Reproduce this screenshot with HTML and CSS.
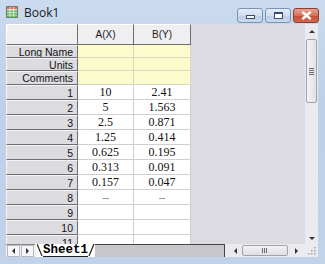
FILE: index.html
```html
<!DOCTYPE html>
<html>
<head>
<meta charset="utf-8">
<link rel="stylesheet" href="styles.css">
</head>
<body>
<div class="window">
  <div class="titlebar">
    <svg class="appicon" width="12" height="12" viewBox="0 0 12 12">
      <rect x="0.5" y="0.5" width="11" height="11" fill="#fff" stroke="#6d7d6a"/>
      <rect x="1" y="1" width="10" height="2.5" fill="#d96b6b"/>
      <rect x="1" y="4" width="10" height="7" fill="#5cb85c"/>
      <path d="M4 1v10M7.5 1v10M1 4h10M1 6.5h10M1 9h10" stroke="#e8f5e0" stroke-width="0.8"/>
    </svg>
    <span class="title">Book1</span>
    <div class="ctrls">
      <div class="btn"><span class="g-min"></span></div>
      <div class="btn"><span class="g-max"></span></div>
      <div class="btn close">
        <svg width="11" height="9" viewBox="0 0 11 9"><path d="M2 1.5l7 6M9 1.5l-7 6" stroke="#fff" stroke-width="2.4" stroke-linecap="round"/></svg>
      </div>
    </div>
  </div>
  <div class="client">
    <div class="main">
      <div class="sheet">
        <div class="grid">
          <div class="corner"></div>
          <div class="colhdr">A(X)</div>
          <div class="colhdr">B(Y)</div>

          <div class="rowhdr">Long Name</div><div class="lbl"></div><div class="lbl"></div>
          <div class="rowhdr">Units</div><div class="lbl"></div><div class="lbl"></div>
          <div class="rowhdr">Comments</div><div class="lbl"></div><div class="lbl"></div>

          <div class="rowhdr">1</div><div class="cell">10</div><div class="cell">2.41</div>
          <div class="rowhdr">2</div><div class="cell">5</div><div class="cell">1.563</div>
          <div class="rowhdr">3</div><div class="cell">2.5</div><div class="cell">0.871</div>
          <div class="rowhdr">4</div><div class="cell">1.25</div><div class="cell">0.414</div>
          <div class="rowhdr">5</div><div class="cell">0.625</div><div class="cell">0.195</div>
          <div class="rowhdr">6</div><div class="cell">0.313</div><div class="cell">0.091</div>
          <div class="rowhdr">7</div><div class="cell">0.157</div><div class="cell">0.047</div>
          <div class="rowhdr">8</div><div class="cell dash">--</div><div class="cell dash">--</div>
          <div class="rowhdr">9</div><div class="cell"></div><div class="cell"></div>
          <div class="rowhdr">10</div><div class="cell"></div><div class="cell"></div>
          <div class="rowhdr">11</div><div class="cell"></div><div class="cell"></div>
        </div>
      </div>
      <div class="vscroll">
        <div class="arrow up"></div>
        <div class="vthumb"><span class="grip"></span></div>
        <div class="vspace"></div>
        <div class="arrow down"></div>
      </div>
    </div>
    <div class="tabbar">
      <div class="tabnav">
        <div class="navbtn"><span class="tri-l"></span></div>
        <div class="navbtn"><span class="tri-r"></span></div>
      </div>
      <div class="tab">
        <svg class="edge" width="6" height="13" viewBox="0 0 6 13"><path d="M0 0L5 12" stroke="#222" stroke-width="1.2" fill="none"/></svg>
        <span class="tabtext">Sheet1</span>
        <svg class="edge" width="7" height="13" viewBox="0 0 7 13"><path d="M1 12L6 0" stroke="#222" stroke-width="1.2" fill="none"/></svg>
      </div>
      <div class="tabfill"></div>
      <div class="hscroll">
        <div class="harrow"><span class="tri-l"></span></div>
        <div class="hthumb"><span class="hgrip"></span></div>
        <div class="harrow"><span class="tri-r"></span></div>
      </div>
      <div class="sizegrip">
        <svg width="8" height="8" viewBox="0 0 8 8"><g fill="#a0a0a8"><rect x="6" y="0" width="1.5" height="1.5"/><rect x="3" y="3" width="1.5" height="1.5"/><rect x="6" y="3" width="1.5" height="1.5"/><rect x="0" y="6" width="1.5" height="1.5"/><rect x="3" y="6" width="1.5" height="1.5"/><rect x="6" y="6" width="1.5" height="1.5"/></g></svg>
      </div>
    </div>
  </div>
</div>
</body>
</html>
```

FILE: styles.css
```css
* { box-sizing: border-box; }
html, body { margin: 0; padding: 0; }
body {
  width: 325px;
  height: 264px;
  overflow: hidden;
  background: #c3d5ea;
}
.window {
  width: 325px;
  height: 264px;
  display: flex;
  flex-direction: column;
  background: linear-gradient(#cadbef, #bdd0e7 40%, #c0d3e9);
}
.titlebar {
  height: 24px;
  display: flex;
  align-items: center;
  padding-left: 6px;
}
.appicon { display: block; }
.title {
  font-family: "Open Sans", "Noto Sans", sans-serif;
  font-size: 12px;
  color: #1a1a1a;
  margin-left: 6px;
  margin-top: 1px;
}
.ctrls {
  margin-left: auto;
  display: flex;
  gap: 2px;
  margin-right: 6px;
  margin-top: 6px;
}
.btn {
  width: 26px;
  height: 15px;
  border: 1px solid #7b92b3;
  border-radius: 3px;
  background: linear-gradient(#e4edf8, #cfdcee 50%, #bccde6 51%, #c9d8ec);
  display: flex;
  align-items: center;
  justify-content: center;
}
.btn.close {
  width: 26px;
  border-color: #8f3b2f;
  background: linear-gradient(#e8a493, #d5705c 50%, #c44a33 51%, #cf6a50);
}
.g-min {
  width: 9px;
  height: 4px;
  background: #fff;
  border: 1px solid #3b4d66;
  margin-top: 4px;
}
.g-max {
  width: 9px;
  height: 7px;
  border: 1px solid #3b4d66;
  border-top-width: 2px;
  background: #fff;
}
.client {
  margin: 0 7px 7px 6px;
  flex: 1;
  display: flex;
  flex-direction: column;
  background: #dddce3;
  min-height: 0;
}
.main {
  flex: 1;
  display: flex;
  min-height: 0;
}
.sheet {
  flex: 1;
  background: #dcdbe2;
  overflow: hidden;
}
.grid {
  display: grid;
  grid-template-columns: 72px 56px 57px;
  grid-template-rows: 21px 13px 13px 14px repeat(11, 15px);
}
.grid > div {
  display: flex;
  align-items: center;
  overflow: hidden;
  white-space: nowrap;
}
.corner {
  background: #efeff1;
  border-top: 1px solid #fff;
  border-left: 1px solid #fff;
  border-right: 1px solid #6e6e6e;
  border-bottom: 1px solid #6e6e6e;
}
.colhdr {
  background: #efeff1;
  border-right: 1px solid #6e6e6e;
  border-bottom: 1px solid #6e6e6e;
  border-top: 1px solid #fff;
  justify-content: center;
  font-family: "Liberation Sans", Arial, sans-serif;
  font-size: 10px;
  color: #222;
}
.rowhdr {
  background: #dcdce0;
  border-top: 1px solid #f4f4f6;
  border-left: 1px solid #f4f4f6;
  border-right: 1px solid #6e6e6e;
  border-bottom: 1px solid #6e6e6e;
  justify-content: flex-end;
  padding-right: 4px;
  font-family: "Liberation Sans", Arial, sans-serif;
  font-size: 10.5px;
  color: #111;
}
.lbl {
  background: #fbfbcb;
  border-right: 1px solid #d8d8c0;
  border-bottom: 1px solid #d8d8c0;
}
.cell {
  background: #fff;
  border-right: 1px solid #cfcfd4;
  border-bottom: 1px solid #cfcfd4;
  justify-content: center;
  font-family: "Liberation Serif", "Times New Roman", serif;
  font-size: 12px;
  color: #111;
}
.cell.dash { color: #777; font-family: "Liberation Sans", Arial, sans-serif; font-size: 10px; }
.vscroll {
  width: 13px;
  background: #ebeaef;
  display: flex;
  flex-direction: column;
  align-items: center;
}
.arrow {
  width: 0; height: 0;
  border-left: 3px solid transparent;
  border-right: 3px solid transparent;
}
.arrow.up { border-bottom: 3px solid #333; margin-top: 6px; }
.arrow.down { border-top: 3px solid #333; margin-bottom: 4px; }
.vthumb {
  margin-top: 6px;
  width: 11px;
  height: 64px;
  border: 1px solid #a2a2aa;
  border-radius: 2px;
  background: linear-gradient(90deg, #f2f2f4, #e2e2e6);
  display: flex;
  align-items: center;
  justify-content: center;
}
.grip {
  width: 5px;
  height: 7px;
  background: repeating-linear-gradient(#6a6a70 0 1px, transparent 1px 2px);
}
.vspace { flex: 1; }
.tabbar {
  height: 13px;
  display: flex;
  background: #f2f2f4;
  overflow: hidden;
}
.tabnav {
  display: flex;
  width: 29px;
  border-top: 1px solid #888;
}
.navbtn {
  width: 13px;
  height: 12px;
  margin-left: 1px;
  border: 1px solid #b8b8be;
  background: #f6f6f8;
  display: flex;
  align-items: center;
  justify-content: center;
}
.tri-l {
  width: 0; height: 0;
  border-top: 3px solid transparent;
  border-bottom: 3px solid transparent;
  border-right: 3px solid #333;
}
.tri-r {
  width: 0; height: 0;
  border-top: 3px solid transparent;
  border-bottom: 3px solid transparent;
  border-left: 3px solid #333;
}
.tab {
  display: flex;
  align-items: stretch;
  background: #fff;
  margin-left: 2px;
  height: 13px;
}
.edge { display: block; }
.tabtext {
  font-family: "Liberation Mono", "Courier New", monospace;
  font-weight: bold;
  font-size: 12.5px;
  line-height: 12px;
  color: #000;
  border-bottom: 1px solid #222;
}
.tabfill {
  width: 130px;
  background: #c8c8cc;
  border-top: 1px solid #444;
  border-right: 1px solid #444;
}
.hscroll {
  flex: 1;
  display: flex;
  align-items: center;
  background: #ebeaef;
  padding-left: 7px;
}
.harrow { width: 6px; display: flex; justify-content: center; }
.hthumb {
  width: 46px;
  height: 11px;
  margin: 0 5px 0 4px;
  border: 1px solid #a2a2aa;
  border-radius: 2px;
  background: linear-gradient(#f2f2f4, #e0e0e4);
  display: flex;
  align-items: center;
  justify-content: center;
}
.hgrip {
  width: 6px;
  height: 5px;
  background: repeating-linear-gradient(90deg, #6a6a70 0 1px, transparent 1px 2px);
}
.sizegrip {
  width: 13px;
  background: #ebeaef;
  display: flex;
  align-items: flex-end;
  justify-content: flex-end;
  padding: 0 2px 2px 0;
}
```
